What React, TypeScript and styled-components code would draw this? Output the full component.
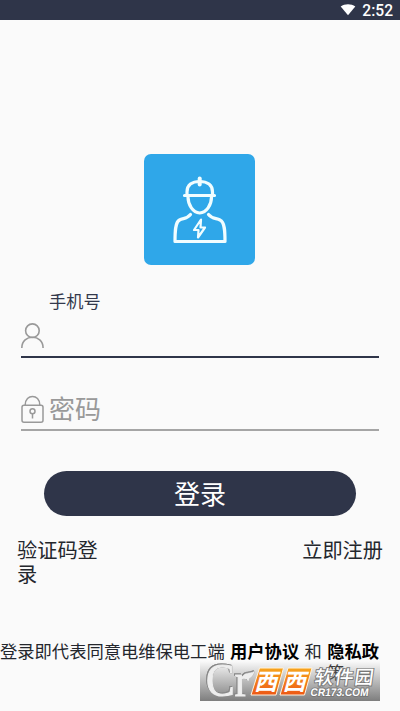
import React from 'react';
import styled, { createGlobalStyle } from 'styled-components';

const navy = '#2f3549';

const GlobalStyle = createGlobalStyle`
  * { box-sizing: border-box; }
  body { margin: 0; background: #fafafa; }
`;

const Screen = styled.main`
  width: 400px;
  height: 711px;
  overflow: hidden;
  display: flex;
  flex-direction: column;
  background: #fafafa;
  color: #24272d;
  font-family: Roboto, 'Noto Sans CJK SC', sans-serif;
`;

const StatusBar = styled.header`
  height: 20px;
  flex: none;
  display: flex;
  align-items: center;
  justify-content: flex-end;
  gap: 6px;
  padding: 2px 7px 0 0;
  background: ${navy};
  color: #fff;
  font-size: 15.6px;
  font-weight: 500;
  line-height: 18px;
  svg { margin-top: -3px; }
`;

const Logo = styled.div`
  width: 111px;
  height: 111px;
  flex: none;
  margin: 134px 0 0 144px;
  border-radius: 7px;
  background: #2fa7e9;
  svg { display: block; }
`;

const Form = styled.form`
  display: flex;
  flex-direction: column;
  padding: 0 21px;
`;

const FieldLabel = styled.label`
  height: 24px;
  margin: 25px 0 0 28px;
  font-size: 17.2px;
  line-height: 24px;
  color: #33384c;
`;

const Field = styled.div<{ $active?: boolean }>`
  height: ${p => (p.$active ? 44 : 39)}px;
  margin-top: ${p => (p.$active ? 0 : 34)}px;
  padding-top: ${p => (p.$active ? 8 : 0)}px;
  display: flex;
  align-items: flex-start;
  gap: 5px;
  border-bottom: ${p => (p.$active ? `2px solid ${navy}` : '2px solid #a5a5a5')};
`;

const Placeholder = styled.span`
  font-size: 26px;
  line-height: 36px;
  color: #999;
`;

const LoginButton = styled.button`
  width: 312px;
  height: 45px;
  margin: 40px 0 0 23px;
  padding: 2px 0 0;
  border: 0;
  border-radius: 23px;
  background: ${navy};
  color: #fff;
  font: 26px/44px Roboto, 'Noto Sans CJK SC', sans-serif;
`;

const Links = styled.nav`
  display: flex;
  justify-content: space-between;
  margin-top: 23px;
  padding: 0 17px;
  font-size: 20.2px;
  line-height: 24px;
`;

const Link = styled.span<{ $narrow?: boolean }>`
  width: ${p => (p.$narrow ? '84px' : 'auto')};
`;

const Footer = styled.footer`
  position: relative;
  margin-top: 53px;
  height: 71px;
`;

const Agreement = styled.p`
  margin: 0;
  font-size: 17.3px;
  line-height: 24px;
  white-space: pre;
  word-spacing: 1.1px;
  strong { color: #000; font-weight: 700; }
`;

const Overflow = styled.div`
  padding-left: 327px;
  font-size: 17.2px;
  line-height: 18px;
  color: #333;
`;

const Watermark = styled.svg`
  position: absolute;
  left: 200px;
  top: 21px;
  overflow: visible;
`;

const Monogram = styled.g`
  filter: drop-shadow(0.5px 0.5px 0.4px #777) drop-shadow(-0.4px -0.3px 0.3px #888);
`;

const Wifi = () => (
  <svg width="16" height="13" viewBox="0 0 16 13">
    <path d="M0.7 3.5C4.8 0.4 11.2 0.4 15.3 3.5L8 12.2Z" fill="#fff" />
  </svg>
);

const Worker = () => (
  <svg width="111" height="111" viewBox="0 0 111 111" fill="none" stroke="#f1fdff" strokeWidth="3.2" strokeLinecap="round" strokeLinejoin="round">
    <path d="M40.5 41.5H70.5M43 40V38C43 31 48 27.5 55.7 27.5C63.4 27.5 68.5 31 68.5 38V40" />
    <path d="M44 43C44 51 49 58.5 55.7 59C62.5 58.5 67.5 51 67.5 43" />
    <path d="M55.7 24.5V30.5" strokeWidth="4" />
    <path d="M46.5 60.5C43 65 39 64 35.5 66C31 68.5 31 78 31 87.5H81C81 78 81 68 76 66C72.5 64 68 65 64.5 60.5" />
    <path d="M57 65.5L50 76H54.5L54 83.5L61 73.5H56.5Z" strokeWidth="2.2" />
  </svg>
);

const Person = () => (
  <svg width="23" height="28" viewBox="0 0 23 28" fill="none" stroke="#999" strokeWidth="1.6">
    <circle cx="11.4" cy="8.7" r="6.8" />
    <path d="M0.8 26C0.8 11.7 22.1 11.7 22.1 26" />
  </svg>
);

const Lock = () => (
  <svg width="23" height="34" viewBox="0 0 23 34" fill="none" stroke="#999" strokeWidth="1.5">
    <rect x="1" y="13.3" width="21" height="17" rx="2" />
    <path d="M4.2 13C4.2 1.5 18.8 1.5 18.8 13M11.5 21.5V26.5" />
    <circle cx="11.5" cy="19.2" r="2.5" />
  </svg>
);

const SiteMark = () => (
  <Watermark width="180" height="40" viewBox="0 0 180 40">
    <defs>
      <linearGradient id="shade" x2="0" y2="1">
        <stop stopColor="#777" stopOpacity="0" />
        <stop offset="0.5" stopColor="#777" stopOpacity="0.48" />
        <stop offset="1" stopColor="#777" stopOpacity="0.95" />
      </linearGradient>
      <linearGradient id="orange" x2="0" y2="1">
        <stop stopColor="#f7a51d" />
        <stop offset="1" stopColor="#ed5715" />
      </linearGradient>
    </defs>
    <rect width="180" height="40" fill="url(#shade)" />
    <Monogram fill="#eee" stroke="#eee" strokeWidth="1.1">
      <text x="6" y="34.5" fontFamily="Liberation Serif, serif" fontSize="46" textLength="43" lengthAdjust="spacingAndGlyphs">Cr</text>
      <path d="M42.5 16.5C44 11 49 13 54.5 10.5C52.5 17 47 20 42.5 16.5Z" strokeWidth="0.5" />
    </Monogram>
    <g stroke="#fff3df" strokeWidth="1" fill="url(#orange)">
      <path d="M59.5 7H83.5L76 34H51Z" />
      <path d="M88 7H112L104.5 34H80Z" />
    </g>
    <text transform="translate(54 28.5) skewX(-15)" fill="#fff" fontFamily="Noto Sans CJK SC, sans-serif" fontWeight="700" fontSize="23" letterSpacing="5.5">西西</text>
    <g fill="#fff" stroke="#777" strokeWidth="1.8" paintOrder="stroke" transform="skewX(-8)">
      <text x="117" y="23" fontFamily="Noto Sans CJK SC, sans-serif" fontWeight="500" fontSize="19" textLength="59">软件园</text>
      <text x="115" y="35" fontFamily="Liberation Sans, sans-serif" fontWeight="700" fontSize="11" textLength="58" lengthAdjust="spacingAndGlyphs">CR173.COM</text>
    </g>
  </Watermark>
);

export default function App() {
  return (
    <Screen>
      <GlobalStyle />
      <StatusBar><Wifi /><span>2:52</span></StatusBar>
      <Logo><Worker /></Logo>
      <Form>
        <FieldLabel>手机号</FieldLabel>
        <Field $active><Person /></Field>
        <Field><Lock /><Placeholder>密码</Placeholder></Field>
        <LoginButton type="button">登录</LoginButton>
      </Form>
      <Links>
        <Link $narrow>验证码登录</Link>
        <Link>立即注册</Link>
      </Links>
      <Footer>
        <Agreement>登录即代表同意电维保电工端 <strong>用户协议</strong> 和 <strong>隐私政</strong></Agreement>
        <Overflow>策</Overflow>
        <SiteMark />
      </Footer>
    </Screen>
  );
}
